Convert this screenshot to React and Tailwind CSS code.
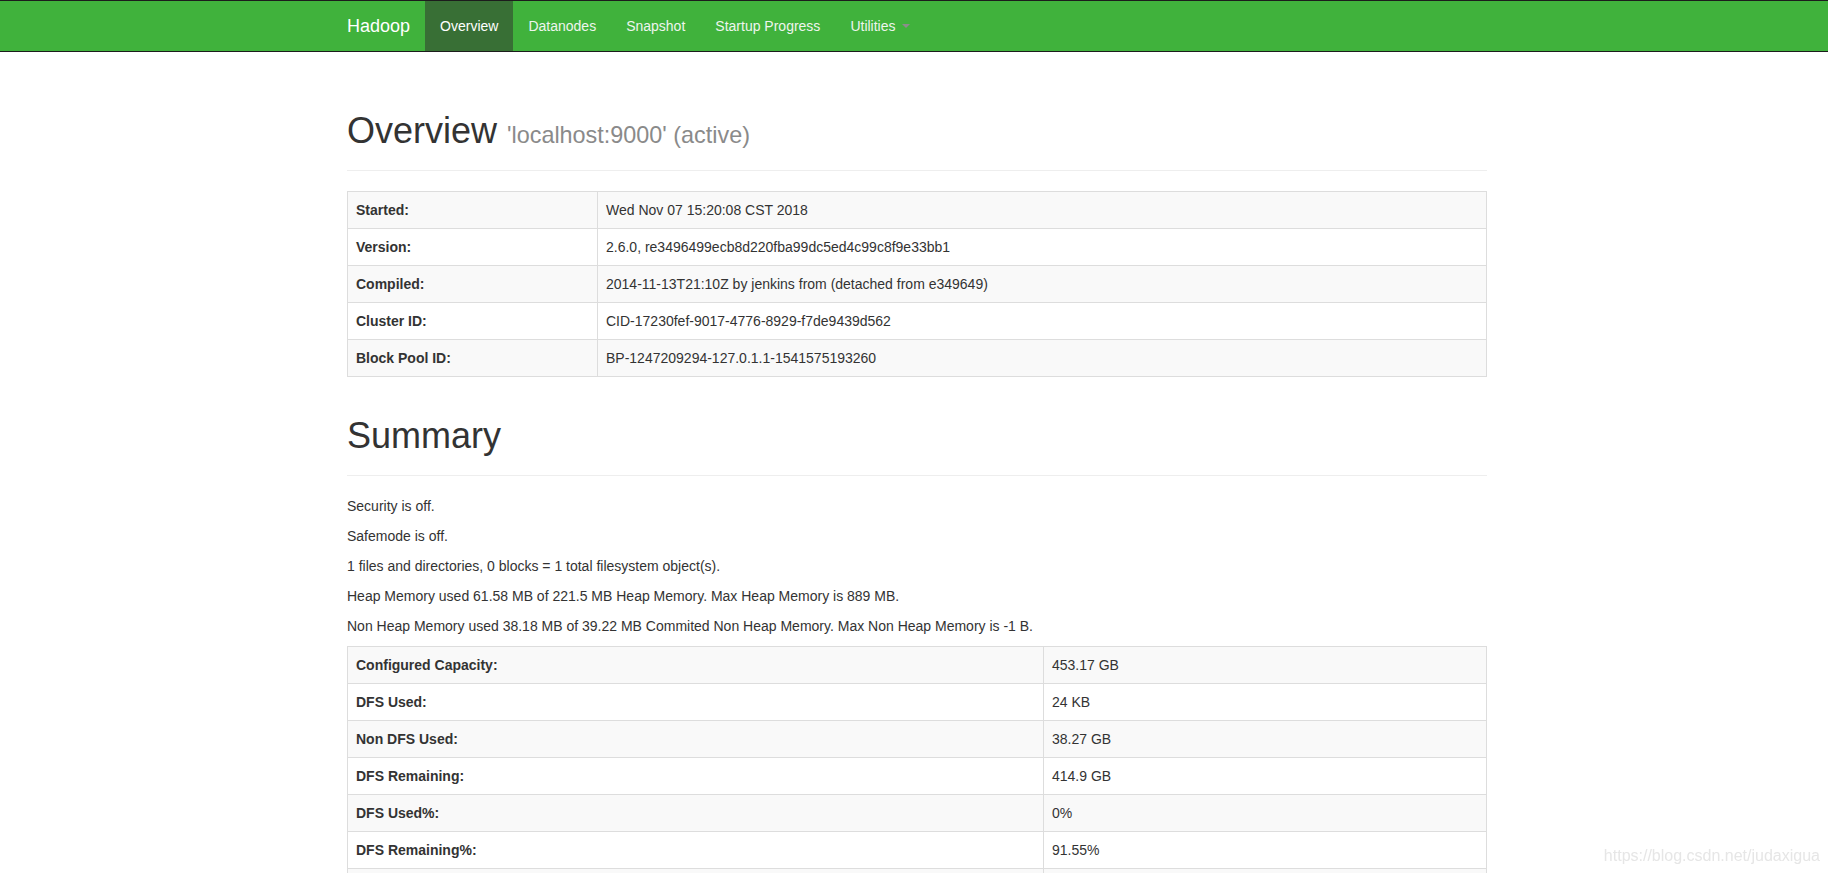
import React from 'react';

const overview = [
  ['Started:', 'Wed Nov 07 15:20:08 CST 2018'],
  ['Version:', '2.6.0, re3496499ecb8d220fba99dc5ed4c99c8f9e33bb1'],
  ['Compiled:', '2014-11-13T21:10Z by jenkins from (detached from e349649)'],
  ['Cluster ID:', 'CID-17230fef-9017-4776-8929-f7de9439d562'],
  ['Block Pool ID:', 'BP-1247209294-127.0.1.1-1541575193260'],
];

const summary = [
  ['Configured Capacity:', '453.17 GB'],
  ['DFS Used:', '24 KB'],
  ['Non DFS Used:', '38.27 GB'],
  ['DFS Remaining:', '414.9 GB'],
  ['DFS Used%:', '0%'],
  ['DFS Remaining%:', '91.55%'],
  ['Block Pool Used:', '24 KB'],
  ['Block Pool Used%:', '0%'],
  ['DataNodes usages% (Min/Median/Max/stdDev):', '0.00% / 0.00% / 0.00% / 0.00%'],
  ['Live Nodes', '1 (Decommissioned: 0)'],
  ['Dead Nodes', '0 (Decommissioned: 0)'],
];

const notes = [
  'Security is off.',
  'Safemode is off.',
  '1 files and directories, 0 blocks = 1 total filesystem object(s).',
  'Heap Memory used 61.58 MB of 221.5 MB Heap Memory. Max Heap Memory is 889 MB.',
  'Non Heap Memory used 38.18 MB of 39.22 MB Commited Non Heap Memory. Max Non Heap Memory is -1 B.',
];

function InfoTable({ rows, labelWidth }) {
  return (
    <table className="w-full border border-[#ddd] mb-5">
      <tbody>
        {rows.map(([k, v], i) => (
          <tr key={k} className={i % 2 === 0 ? 'bg-[#f9f9f9]' : 'bg-white'}>
            <th className={`${labelWidth} border border-[#ddd] p-2 text-left font-bold leading-5 align-top`}>{k}</th>
            <td className="border border-[#ddd] p-2 leading-5 align-top">{v}</td>
          </tr>
        ))}
      </tbody>
    </table>
  );
}

export default function App() {
  const links = ['Datanodes', 'Snapshot', 'Startup Progress'];

  return (
    <div className="relative min-h-screen bg-white text-[14px] text-[#333] font-['Liberation_Sans',Arial,sans-serif]">
      {/* Navbar */}
      <div className="h-[52px] bg-[#40b23c] border-y border-[#1c1c1c]">
        <div className="w-[1146px] mx-auto pl-[6px] flex">
          <a className="-ml-[15px] px-[15px] h-[50px] flex items-center text-[18px] text-white">Hadoop</a>
          <a className="px-[15px] h-[50px] flex items-center bg-[#386f35] text-white">Overview</a>
          {links.map((l) => (
            <a key={l} className="px-[15px] h-[50px] flex items-center text-[#eef5ee]">{l}</a>
          ))}
          <a className="px-[15px] h-[50px] flex items-center text-[#eef5ee]">
            Utilities
            <span className="ml-[6px] inline-block w-0 h-0 border-t-[4px] border-t-[#8c8c8c] border-x-[4px] border-x-transparent" />
          </a>
        </div>
      </div>

      <div className="w-[1146px] mx-auto pl-[6px]">
        {/* Overview */}
        <div className="mt-[59px] mb-5 pb-[9px] border-b border-[#eee]">
          <h1 className="text-[36px] leading-[40px] mb-[10px]">
            Overview <span className="text-[23.4px] leading-none text-[#8a8a8a]">'localhost:9000' (active)</span>
          </h1>
        </div>
        <InfoTable rows={overview} labelWidth="w-[250px]" />

        {/* Summary */}
        <div className="mt-[39px] mb-5 pb-[9px] border-b border-[#eee]">
          <h1 className="text-[36px] leading-[40px] mb-[10px]">Summary</h1>
        </div>
        {notes.map((n) => (
          <p key={n} className="leading-5 mb-[10px]">{n}</p>
        ))}
        <InfoTable rows={summary} labelWidth="w-[696px]" />
      </div>

      <div className="fixed right-[8px] top-[844px] text-[16px] text-[#e6e6e6]">
        https://blog.csdn.net/judaxigua
      </div>
    </div>
  );
}
